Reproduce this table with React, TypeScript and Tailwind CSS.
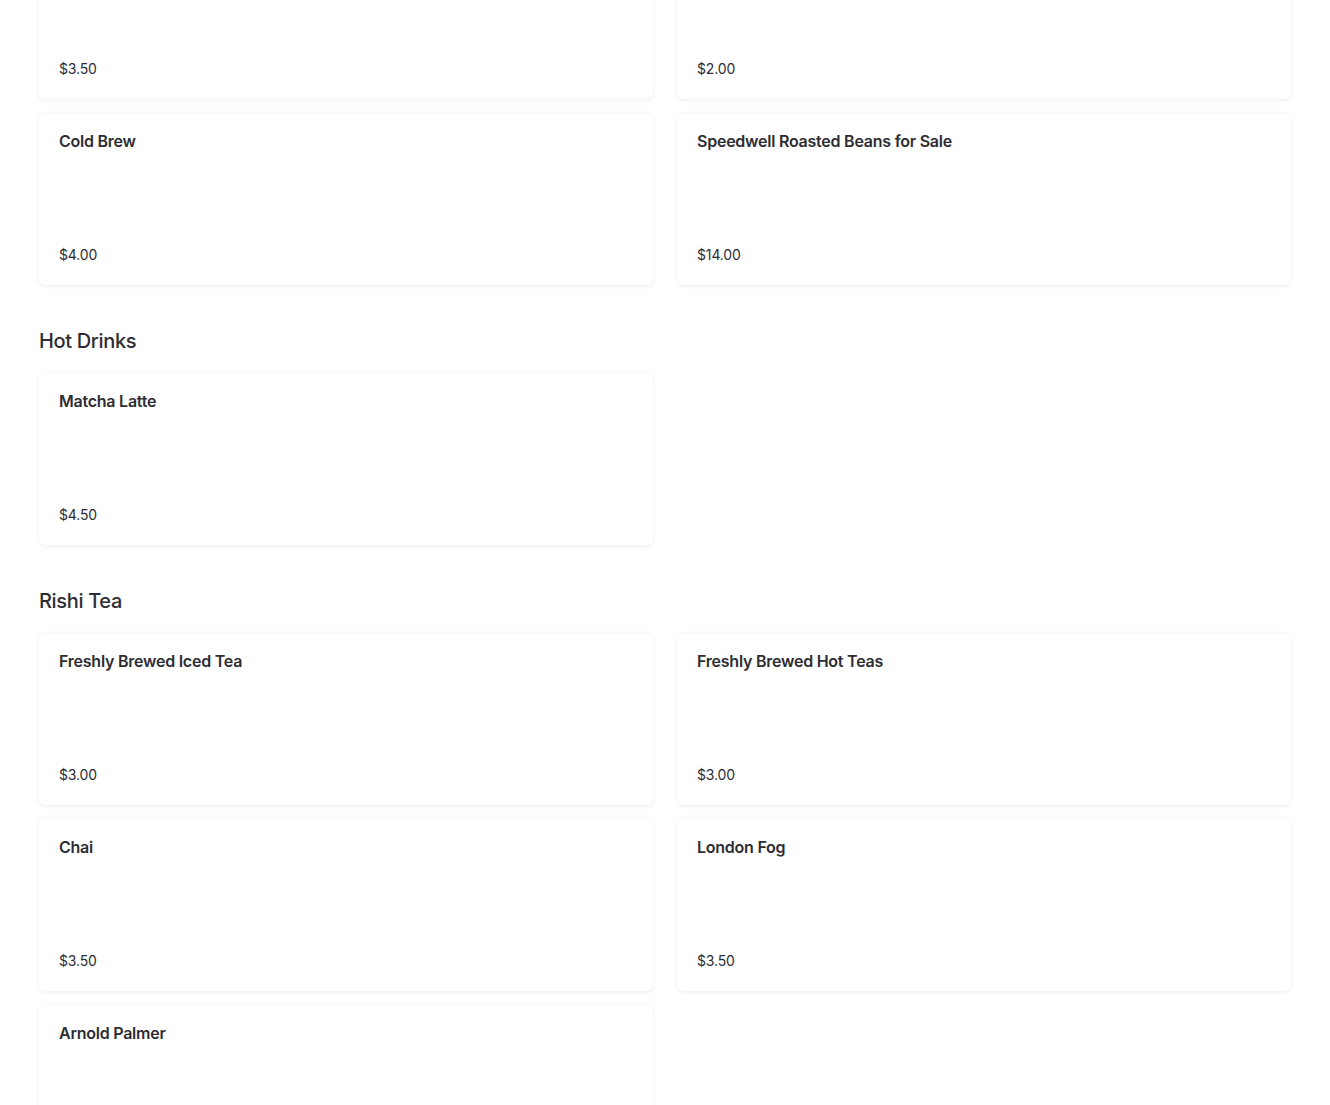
import React from 'react';

interface MenuItem {
  name: string;
  price: string;
}

interface MenuSection {
  title?: string;
  items: MenuItem[];
}

const sections: MenuSection[] = [
  {
    items: [
      { name: 'Iced Latte', price: '$3.50' },
      { name: 'Espresso', price: '$2.00' },
      { name: 'Cold Brew', price: '$4.00' },
      { name: 'Speedwell Roasted Beans for Sale', price: '$14.00' },
    ],
  },
  {
    title: 'Hot Drinks',
    items: [{ name: 'Matcha Latte', price: '$4.50' }],
  },
  {
    title: 'Rishi Tea',
    items: [
      { name: 'Freshly Brewed Iced Tea', price: '$3.00' },
      { name: 'Freshly Brewed Hot Teas', price: '$3.00' },
      { name: 'Chai', price: '$3.50' },
      { name: 'London Fog', price: '$3.50' },
      { name: 'Arnold Palmer', price: '$3.00' },
    ],
  },
];

const ItemCard: React.FC<{ item: MenuItem }> = ({ item }) => (
  <div className="flex h-[172px] flex-col justify-between rounded-md bg-white px-5 pt-4 pb-5 shadow-[0_1px_5px_rgba(0,0,0,0.08)]">
    <div className="text-[16px] leading-6 font-semibold tracking-[-0.015em] text-[#2d2d33]">{item.name}</div>
    <div className="text-[14px] leading-5 tracking-[-0.01em] text-[#2d2d33]">{item.price}</div>
  </div>
);

export default function App() {
  return (
    <div className="min-h-screen overflow-hidden bg-white font-['Inter',sans-serif]">
      <div className="-mt-[73px] px-[39px] pb-10">
        {sections.map((section, i) => (
          <section key={i} className={i > 0 ? 'mt-[42px]' : ''}>
            {section.title && (
              <h2 className="mb-[18px] text-[20px] leading-7 font-medium tracking-[-0.017em] text-[#2d2d33]">
                {section.title}
              </h2>
            )}
            <div className="grid grid-cols-2 gap-x-6 gap-y-[14px]">
              {section.items.map((item) => (
                <ItemCard key={item.name} item={item} />
              ))}
            </div>
          </section>
        ))}
      </div>
    </div>
  );
}
